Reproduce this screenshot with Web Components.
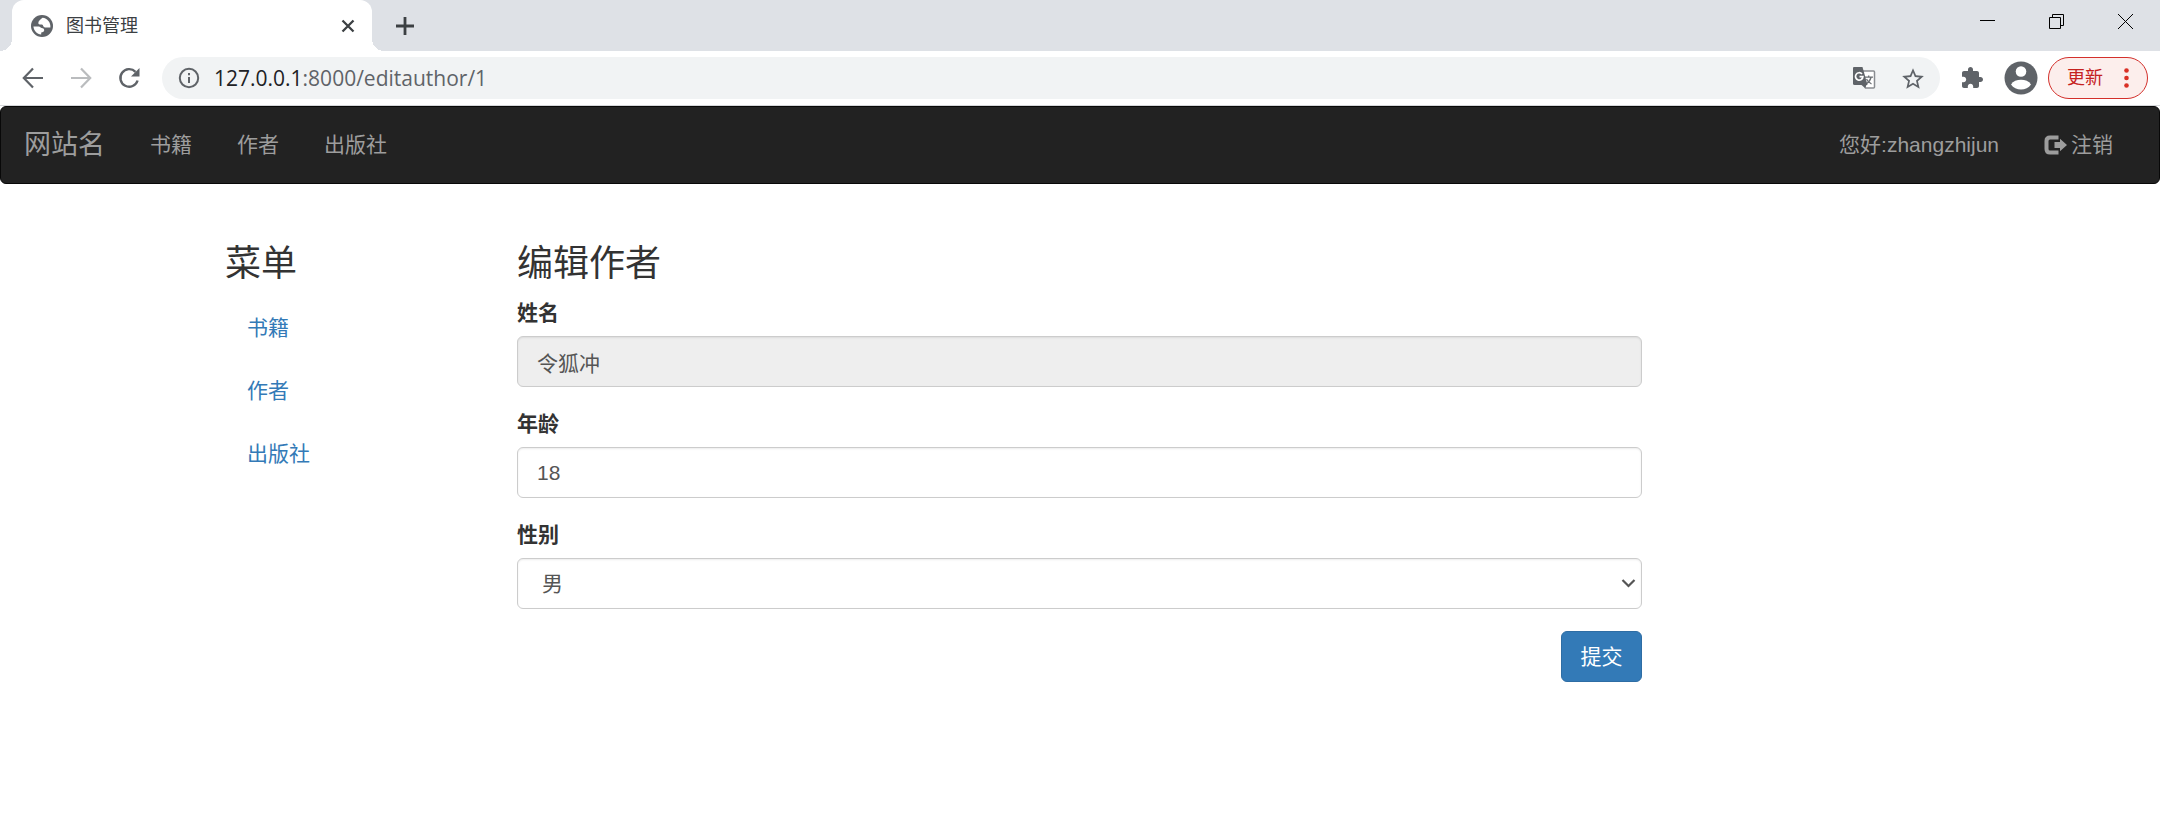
<!DOCTYPE html>
<html lang="zh-CN">
<head>
<meta charset="utf-8">
<title>图书管理</title>
<style>
  body {
    margin: 0;
    background: #fff;
    color: #333;
    font: 21px/30px "Liberation Sans", "Noto Sans CJK SC", sans-serif;
  }
</style>
</head>
<body>
<browser-tabs heading="图书管理"></browser-tabs>
<browser-toolbar>
  <span slot="host">127.0.0.1</span><span slot="path">:8000/editauthor/1</span>
</browser-toolbar>
<site-navbar>
  <a slot="brand" href="#">网站名</a>
  <nav-link>书籍</nav-link>
  <nav-link>作者</nav-link>
  <nav-link>出版社</nav-link>
  <nav-link slot="right">您好:zhangzhijun</nav-link>
  <nav-link slot="right" icon>注销</nav-link>
</site-navbar>
<page-columns>
  <side-menu slot="side" heading="菜单"></side-menu>
  <author-form heading="编辑作者"></author-form>
</page-columns>

<script>
  const define = (name, html) => customElements.define(name, class extends HTMLElement {
    constructor() {
      super();
      this.attachShadow({ mode: 'open' }).innerHTML = '<style>:host,*{box-sizing:border-box}svg{display:block;flex:none}button{display:grid;place-items:center;padding:0;border:0;background:none;color:inherit;font:inherit}</style>' + html;
    }
    connectedCallback() {
      const h = this.shadowRoot.querySelector('[data-heading]');
      if (h) h.textContent = this.getAttribute('heading');
    }
  });

  define('browser-tabs', `
    <style>
      :host { display: flex; height: 51px; background: #dee1e6; color: #3c4043; font-size: 18px; line-height: 26px; }
      .tab { position: relative; display: flex; align-items: center; width: 360px; margin-left: 12px; padding: 0 12px 0 18px; background: #fff; border-radius: 12px 12px 0 0; }
      .tab::before, .tab::after { content: ""; position: absolute; bottom: 0; width: 12px; height: 12px; }
      .tab::before { right: 100%; background: radial-gradient(circle at 0 0, #dee1e6 12px, #fff 12px); }
      .tab::after { left: 100%; background: radial-gradient(circle at 100% 0, #dee1e6 12px, #fff 12px); }
      .title { flex: 1; margin-left: 12px; }
      .tab button { width: 24px; height: 24px; }
      .add { width: 66px; }
      .window { display: flex; height: 42px; margin-left: auto; color: #000; }
      .window button { width: 69px; }
    </style>
    <div class="tab">
      <svg width="24" height="24" viewBox="0 0 24 24"><circle cx="12" cy="12" r="11" fill="#5f6368"/><path fill="#fff" d="M12.500 3.800c-2 1.400-4.200 3.500-4.200 5.100 0 1.400 1.100 1.700 2.600 1.700s2 .5 2.300 1.400c.4 1.200 1.600 1.500 3 1.500h4.200c.5-5-3-9.300-7.900-9.700zM3.400 12.600c.4 4.300 3.600 7.500 7.800 8v-2c1.600-.2 3-1 3-2.300 0-1.500-1.200-2-2.500-2.200-1-.2-1.500-1.500-3-1.500z"/></svg>
      <span class="title" data-heading></span>
      <button aria-label="关闭标签页"><svg width="14" height="14" viewBox="0 0 14 14" stroke="currentColor" stroke-width="2.300"><path d="M1.500 1.500l11 11M12.500 1.500l-11 11"/></svg></button>
    </div>
    <button class="add" aria-label="新标签页"><svg width="18" height="18" viewBox="0 0 18 18" stroke="currentColor" stroke-width="2.800"><path d="M9 0v18M0 9h18"/></svg></button>
    <div class="window">
      <button aria-label="最小化"><svg width="15" height="15" shape-rendering="crispEdges"><path d="M0 6h15v1H0z"/></svg></button>
      <button aria-label="还原"><svg width="15" height="15" fill="none" stroke="currentColor"><path d="M.5 3.500h11v11H.5zM3.500 3.500v-3h11v11h-3"/></svg></button>
      <button aria-label="关闭"><svg width="15" height="15" stroke="currentColor"><path d="M0 0l15 15M15 0L0 15"/></svg></button>
    </div>`);

  define('browser-toolbar', `
    <style>
      :host { display: flex; align-items: center; gap: 10px; height: 55px; padding: 0 12px 0 18px; border-bottom: 1px solid #d5d7da; color: #5f6368; }
      .moves { display: flex; gap: 18px; margin-right: 8px; }
      .address { display: flex; flex: 1; align-items: center; height: 42px; padding: 0 16px; border-radius: 21px; background: #f1f3f4; }
      .url { flex: 1; margin-left: 14px; font: 21px/28px "Open Sans", sans-serif; }
      ::slotted([slot=host]) { color: #202124; }
      .address button { width: 24px; height: 24px; margin-left: 24px; }
      .puzzle { width: 44px; height: 34px; }
      .update { display: flex; align-items: center; justify-content: space-between; width: 100px; height: 42px; padding: 0 18px; border: 1px solid #d3302b; border-radius: 21px; background: #fceeec; color: #c5221f; font-size: 18px; }
    </style>
    <div class="moves">
      <button aria-label="后退"><svg width="30" height="30" viewBox="0 0 30 30" fill="none" stroke="currentColor" stroke-width="2.200"><path d="M25 15H6.500M15 5.500L5.800 15l9.200 9.500"/></svg></button>
      <button aria-label="前进"><svg width="30" height="30" viewBox="0 0 30 30" fill="none" stroke="#babcbe" stroke-width="2.200"><path d="M5 15h18.500M15 5.500l9.200 9.500-9.200 9.500"/></svg></button>
      <button aria-label="重新加载"><svg width="30" height="30" viewBox="0 0 30 30"><path fill="none" stroke="currentColor" stroke-width="2.400" d="M23.600 17.500A8.800 8.800 0 1 1 21.500 8.800"/><path fill="currentColor" d="M25.500 5v8.500H17z"/></svg></button>
    </div>
    <div class="address">
      <svg width="22" height="22" viewBox="0 0 22 22"><circle cx="11" cy="11" r="9.200" fill="none" stroke="currentColor" stroke-width="2"/><path fill="currentColor" d="M10 10h2v6h-2zM10 6h2v2.200h-2z"/></svg>
      <div class="url" role="textbox" aria-label="地址" contenteditable="true"><slot name="host"></slot><slot name="path"></slot></div>
      <button aria-label="翻译"><svg width="24" height="24" viewBox="0 0 24 24"><path fill="#fff" stroke="#8a8d91" stroke-width="1.500" d="M8 5h13.500q1 0 1 1v15q0 1-1 1h-8z"/><path fill="none" stroke="#6b6f73" stroke-width="1.300" d="M12.500 11.200h8.500M16.700 9.500v2M19 11.500c-.8 3-2.500 5-5 6.500M14.500 13c1 2 2.600 3.800 5 5"/><path fill="#5f6368" d="M2 1h8.500l5 18H2.500q-1.500 0-1.500-1.500V2q0-1 1-1z"/><path fill="#5f6368" d="M9.500 19h5L13 22z"/><path fill="none" stroke="#fff" stroke-width="1.700" d="M10 8a3.700 3.700 0 1 0 .9 2.600H7.500"/></svg></button>
      <button aria-label="收藏"><svg width="26" height="26" viewBox="0 0 24 24" fill="currentColor"><path d="M22 9.240l-7.190-.62L12 2 9.190 8.630 2 9.240l5.460 4.730L5.820 21 12 17.270 18.180 21l-1.630-7.030L22 9.240zM12 15.400l-3.760 2.270 1-4.280-3.320-2.880 4.380-.38L12 6.100l1.710 4.040 4.380.38-3.320 2.880 1 4.280L12 15.400z"/></svg></button>
    </div>
    <button class="puzzle" aria-label="扩展程序"><svg width="24" height="24" viewBox="0 0 24 24" fill="currentColor"><path d="M20.500 11H19V7c0-1.100-.9-2-2-2h-4V3.500C13 2.120 11.880 1 10.500 1S8 2.120 8 3.500V5H4c-1.100 0-1.990.9-1.990 2v3.800H3.500c1.490 0 2.700 1.210 2.700 2.700s-1.210 2.700-2.700 2.700H2V20c0 1.100.9 2 2 2h3.800v-1.500c0-1.490 1.210-2.700 2.700-2.700 1.490 0 2.700 1.210 2.700 2.700V22H17c1.100 0 2-.9 2-2v-4h1.500c1.380 0 2.500-1.120 2.500-2.500S21.880 11 20.500 11z"/></svg></button>
    <button aria-label="用户"><svg width="34" height="34" viewBox="0 0 34 34"><circle cx="17" cy="17" r="16.500" fill="currentColor"/><circle cx="17" cy="10.500" r="5.300" fill="#fff"/><path fill="#fff" d="M7 23.500c2-3.300 6-4.700 10-4.700s8 1.400 10 4.700c-2.200 3.200-6 5-10 5s-7.800-1.800-10-5z"/></svg></button>
    <button class="update">更新<svg width="5" height="20" viewBox="0 0 5 20" fill="#d93025"><circle cx="2.500" cy="2.500" r="2.300"/><circle cx="2.500" cy="10" r="2.300"/><circle cx="2.500" cy="17.500" r="2.300"/></svg></button>`);

  define('site-navbar', `
    <style>
      :host { display: block; }
      nav { display: flex; align-items: center; gap: 1px; height: 78px; padding: 0 24px 0 1px; border: 1px solid #080808; border-radius: 6px; background: #222; color: #9d9d9d; }
      ::slotted(a) { padding: 0 22px; color: inherit; font-size: 27px; text-decoration: none; }
      .right { display: flex; gap: 1px; margin-left: auto; }
    </style>
    <nav><slot name="brand"></slot><slot></slot><div class="right"><slot name="right"></slot></div></nav>`);

  define('nav-link', `
    <style>
      :host { display: block; }
      a { display: flex; align-items: center; gap: 3px; padding: 0 22px; color: inherit; text-decoration: none; }
      svg { display: none; }
      :host([icon]) svg { display: block; }
    </style>
    <a href="#"><svg width="24" height="20" viewBox="0 0 24 20"><path fill="none" stroke="currentColor" stroke-width="4" d="M14.500 2.500H6q-3.500 0-3.500 3.500v8q0 3.500 3.500 3.500h8.500"/><path fill="currentColor" d="M10.500 7H16V3.800L23 10l-7 6.200V13h-5.500z"/></svg><slot></slot></a>`);

  define('page-columns', `
    <style>
      :host { display: grid; grid-template-columns: 247fr 1125fr 248fr; column-gap: 45px; max-width: 1710px; margin: 60px auto 0; }
    </style>
    <div><slot name="side"></slot></div>
    <main><slot></slot></main>`);

  const headingStyle = 'h3 { margin: 0 0 14px; font-size: 36px; line-height: 40px; font-weight: 400; }';

  define('side-menu', `
    <style>
      :host { display: block; }
      ${headingStyle}
      ul { display: grid; gap: 3px; margin: 0; padding: 0; list-style: none; }
      a { display: block; padding: 15px 22px; color: #337ab7; text-decoration: none; }
    </style>
    <h3 data-heading></h3>
    <ul><li><a href="#">书籍</a></li><li><a href="#">作者</a></li><li><a href="#">出版社</a></li></ul>`);

  define('author-form', `
    <style>
      :host { display: block; }
      ${headingStyle}
      label { display: block; margin-bottom: 8px; font-weight: 700; }
      input, select { display: block; width: 100%; height: 51px; margin: 0 0 22px; padding: 0 19px; border: 1px solid #ccc; border-radius: 6px; background: #fff; box-shadow: inset 0 1px 2px rgba(0, 0, 0, .08); color: #555; font: inherit; }
      input:disabled { background: #eee; }
      select { appearance: none; padding: 0 24px; }
      .pick { position: relative; }
      .pick svg { position: absolute; right: 6px; top: 20px; pointer-events: none; }
      .submit { width: 81px; height: 51px; margin-left: auto; border: 1px solid #2e6da4; border-radius: 6px; background: #337ab7; color: #fff; }
    </style>
    <h3 data-heading></h3>
    <form>
      <label for="name">姓名</label>
      <input id="name" value="令狐冲" disabled>
      <label for="age">年龄</label>
      <input id="age" value="18">
      <label for="gender">性别</label>
      <div class="pick">
        <select id="gender"><option>男</option><option>女</option></select>
        <svg width="15" height="10" viewBox="0 0 15 10" fill="none" stroke="#555" stroke-width="2.200"><path d="M1.500 2l6 6 6-6"/></svg>
      </div>
      <button class="submit" type="button">提交</button>
    </form>`);
</script>
</body>
</html>
